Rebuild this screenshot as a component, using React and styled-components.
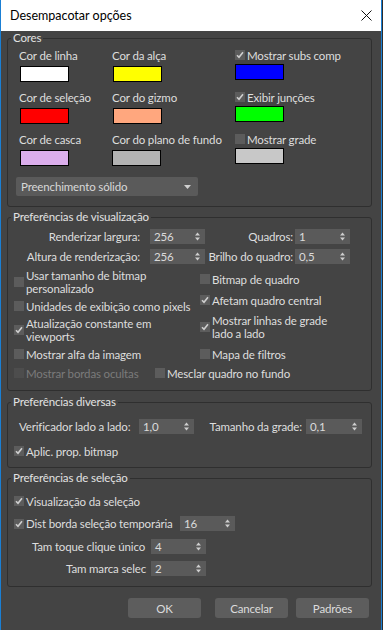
import React from 'react';
import styled, { createGlobalStyle } from 'styled-components';

const GlobalStyle = createGlobalStyle`
  html, body { margin: 0; padding: 0; background: #2d2d2d; }
  body { font-family: Lato, "Noto Sans", "Liberation Sans", sans-serif; }
`;

const Window = styled.div`
  width: 382px;
  height: 630px;
  box-sizing: border-box;
  border-left: 1px solid #1a7fd4;
  border-right: 1px solid #1a7fd4;
  background: #444444;
  display: flex;
  flex-direction: column;
  font-size: 11.5px;
  letter-spacing: -0.15px;
  color: #dedede;
`;

const TitleBar = styled.div`
  height: 31px;
  flex: none;
  background: #ffffff;
  color: #000;
  display: flex;
  align-items: center;
  justify-content: space-between;
  padding: 0 9px 0 9px;
  font-size: 12.5px;
  letter-spacing: 0;
`;

const Body = styled.div`
  padding: 0 9px 0 6px;
  display: flex;
  flex-direction: column;
`;

const Group = styled.fieldset`
  margin: ${(p) => p.$top || 0}px 0 0 0;
  padding: 0;
  border: 1px solid #2f2f2f;
  border-radius: 3px;
  min-width: 0;
`;

const Legend = styled.legend`
  margin-left: 3px;
  padding: 0 2px;
  line-height: 14px;
  color: #e2e2e2;
`;

/* ---- Cores ---- */

const ColorGrid = styled.div`
  display: grid;
  grid-template-columns: 93px 123px 1fr;
  row-gap: 8px;
  padding: 3px 0 0 11px;
`;

const ColorCell = styled.div`
  display: flex;
  flex-direction: column;
  align-items: flex-start;
`;

const CellLabel = styled.div`
  height: 16px;
  line-height: 16px;
  white-space: nowrap;
  display: flex;
  align-items: center;
`;

const Swatch = styled.div`
  width: 49px;
  height: 16px;
  margin: 2px 0 0 ${(p) => (p.$shift ? 1 : 0)}px;
  box-sizing: border-box;
  border: 1px solid #000;
  background: ${(p) => p.$color};
`;

const DropRow = styled.div`
  padding: 11px 0 10px 8px;
`;

const Dropdown = styled.div`
  width: 182px;
  height: 19px;
  box-sizing: border-box;
  background: #5a5a5a;
  border-radius: 2px;
  display: flex;
  align-items: center;
  justify-content: space-between;
  padding: 0 7px 0 5px;
  color: #d8d8d8;
`;

/* ---- shared controls ---- */

const Box = styled.span`
  width: 10px;
  height: 10px;
  flex: none;
  background: ${(p) => (p.$disabled ? '#4d4d4d' : '#5c5c5c')};
  display: inline-flex;
  align-items: center;
  justify-content: center;
`;

const CheckLabel = styled.div`
  display: flex;
  align-items: center;
  gap: 2px;
  line-height: 13px;
  min-height: 14px;
  white-space: nowrap;
  color: ${(p) => (p.$disabled ? '#7b7b7b' : 'inherit')};
`;

const Tick = () => (
  <svg width="8" height="8" viewBox="0 0 8 8">
    <polyline
      points="1,4.2 3,6.3 7,1.2"
      fill="none"
      stroke="#cfcfcf"
      strokeWidth="1.6"
    />
  </svg>
);

function Check({ checked, disabled, children }) {
  return (
    <CheckLabel $disabled={disabled}>
      <Box $disabled={disabled}>{checked && <Tick />}</Box>
      <span>{children}</span>
    </CheckLabel>
  );
}

const SpinBox = styled.div`
  width: ${(p) => p.$w || 55}px;
  height: 15px;
  flex: none;
  box-sizing: border-box;
  background: #5a5a5a;
  display: flex;
  align-items: center;
  justify-content: space-between;
  padding: 0 5px 0 4px;
  color: #dadada;
`;

const Arrows = () => (
  <svg width="5" height="9" viewBox="0 0 5 9">
    <polygon points="0,3.5 2.5,0.5 5,3.5" fill="#cfcfcf" />
    <polygon points="0,5.5 2.5,8.5 5,5.5" fill="#cfcfcf" />
  </svg>
);

function Spinner({ value, w }) {
  return (
    <SpinBox $w={w}>
      <span>{value}</span>
      <Arrows />
    </SpinBox>
  );
}

/* ---- Visualização ---- */

const SpinGrid = styled.div`
  display: grid;
  grid-template-columns: 142px 55px 90px 55px;
  row-gap: 5px;
  padding-top: 5px;
  align-items: center;
`;

const FieldLabel = styled.div`
  flex: none;
  width: ${(p) => (p.$w ? `${p.$w}px` : 'auto')};
  box-sizing: border-box;
  text-align: ${(p) => p.$align || 'right'};
  white-space: nowrap;
  padding-right: ${(p) => p.$pad || 0}px;
`;

const CheckArea = styled.div`
  display: grid;
  grid-template-columns: 186px 1fr;
  padding: 5px 0 0 6px;
`;

const CheckCol = styled.div`
  display: flex;
  flex-direction: column;
  gap: ${(p) => p.$gap}px;
  padding-top: ${(p) => p.$top || 0}px;
`;

const BottomRow = styled.div`
  display: grid;
  grid-template-columns: 141px 1fr;
  align-items: center;
  padding: 5px 0 10px 6px;
`;

/* ---- Diversas ---- */

const InlineRow = styled.div`
  display: flex;
  align-items: center;
  padding: ${(p) => p.$pad};
`;

/* ---- Seleção ---- */

const SelList = styled.div`
  display: flex;
  flex-direction: column;
  padding: 9px 0 10px 6px;
`;

const SelRow = styled.div`
  display: flex;
  align-items: center;
  margin-top: ${(p) => p.$top || 0}px;
`;

const Buttons = styled.div`
  display: flex;
  justify-content: flex-end;
  margin: 11px 3px 0 0;
`;

const Button = styled.div`
  width: 73px;
  height: 20px;
  margin-left: ${(p) => p.$gap}px;
  border-radius: 3px;
  background: #5d5d5d;
  color: #dcdcdc;
  display: flex;
  align-items: center;
  justify-content: center;
`;

export default function App() {
  return (
    <>
      <GlobalStyle />
      <Window>
        <TitleBar>
          <span>Desempacotar opções</span>
          <svg width="11" height="11" viewBox="0 0 11 11">
            <path d="M0.5 0.5 L10.5 10.5 M10.5 0.5 L0.5 10.5" stroke="#111" strokeWidth="1" />
          </svg>
        </TitleBar>
        <Body>
          <Group>
            <Legend>Cores</Legend>
            <ColorGrid>
              <ColorCell>
                <CellLabel>Cor de linha</CellLabel>
                <Swatch $color="#ffffff" $shift />
              </ColorCell>
              <ColorCell>
                <CellLabel>Cor da alça</CellLabel>
                <Swatch $color="#ffff00" $shift />
              </ColorCell>
              <ColorCell>
                <Check checked>Mostrar subs comp</Check>
                <Swatch $color="#0000ff" />
              </ColorCell>
              <ColorCell>
                <CellLabel>Cor de seleção</CellLabel>
                <Swatch $color="#ff0000" $shift />
              </ColorCell>
              <ColorCell>
                <CellLabel>Cor do gizmo</CellLabel>
                <Swatch $color="#ffa77e" $shift />
              </ColorCell>
              <ColorCell>
                <Check checked>Exibir junções</Check>
                <Swatch $color="#00ff00" />
              </ColorCell>
              <ColorCell>
                <CellLabel>Cor de casca</CellLabel>
                <Swatch $color="#dbaeec" $shift />
              </ColorCell>
              <ColorCell>
                <CellLabel>Cor do plano de fundo</CellLabel>
                <Swatch $color="#b3b3b3" />
              </ColorCell>
              <ColorCell>
                <Check>Mostrar grade</Check>
                <Swatch $color="#c8c8c8" />
              </ColorCell>
            </ColorGrid>
            <DropRow>
              <Dropdown>
                <span>Preenchimento sólido</span>
                <svg width="7" height="4" viewBox="0 0 7 4">
                  <polygon points="0,0 7,0 3.5,4" fill="#d0d0d0" />
                </svg>
              </Dropdown>
            </DropRow>
          </Group>

          <Group $top={3}>
            <Legend>Preferências de visualização</Legend>
            <SpinGrid>
              <FieldLabel $pad={10}>Renderizar largura:</FieldLabel>
              <Spinner value="256" />
              <FieldLabel $pad={2}>Quadros:</FieldLabel>
              <Spinner value="1" />
              <FieldLabel $pad={10}>Altura de renderização:</FieldLabel>
              <Spinner value="256" />
              <FieldLabel $pad={2}>Brilho do quadro:</FieldLabel>
              <Spinner value="0,5" />
            </SpinGrid>
            <CheckArea>
              <CheckCol $gap={4}>
                <Check>
                  Usar tamanho de bitmap
                  <br />
                  personalizado
                </Check>
                <Check>Unidades de exibição como pixels</Check>
                <Check checked>
                  Atualização constante em
                  <br />
                  viewports
                </Check>
                <Check>Mostrar alfa da imagem</Check>
              </CheckCol>
              <CheckCol $gap={7} $top={3}>
                <Check>Bitmap de quadro</Check>
                <Check checked>Afetam quadro central</Check>
                <Check checked>
                  Mostrar linhas de grade
                  <br />
                  lado a lado
                </Check>
                <Check>Mapa de filtros</Check>
              </CheckCol>
            </CheckArea>
            <BottomRow>
              <Check disabled>Mostrar bordas ocultas</Check>
              <Check>Mesclar quadro no fundo</Check>
            </BottomRow>
          </Group>

          <Group $top={4}>
            <Legend>Preferências diversas</Legend>
            <InlineRow $pad="10px 0 0 11px">
              <FieldLabel $w={120} $align="left">Verificador lado a lado:</FieldLabel>
              <Spinner value="1,0" />
              <FieldLabel $w={112} $pad={4}>Tamanho da grade:</FieldLabel>
              <Spinner value="0,1" w={56} />
            </InlineRow>
            <InlineRow $pad="10px 0 9px 6px">
              <Check checked>Aplic. prop. bitmap</Check>
            </InlineRow>
          </Group>

          <Group $top={3}>
            <Legend>Preferências de seleção</Legend>
            <SelList>
              <Check checked>Visualização da seleção</Check>
              <SelRow $top={8}>
                <FieldLabel $w={166} $align="left">
                  <Check checked>Dist borda seleção temporária</Check>
                </FieldLabel>
                <Spinner value="16" />
              </SelRow>
              <SelRow $top={8}>
                <FieldLabel $w={137} $pad={6}>Tam toque clique único</FieldLabel>
                <Spinner value="4" />
              </SelRow>
              <SelRow $top={7}>
                <FieldLabel $w={137} $pad={5}>Tam marca selec</FieldLabel>
                <Spinner value="2" />
              </SelRow>
            </SelList>
          </Group>

          <Buttons>
            <Button $gap={0}>OK</Button>
            <Button $gap={14}>Cancelar</Button>
            <Button $gap={8}>Padrões</Button>
          </Buttons>
        </Body>
      </Window>
    </>
  );
}
